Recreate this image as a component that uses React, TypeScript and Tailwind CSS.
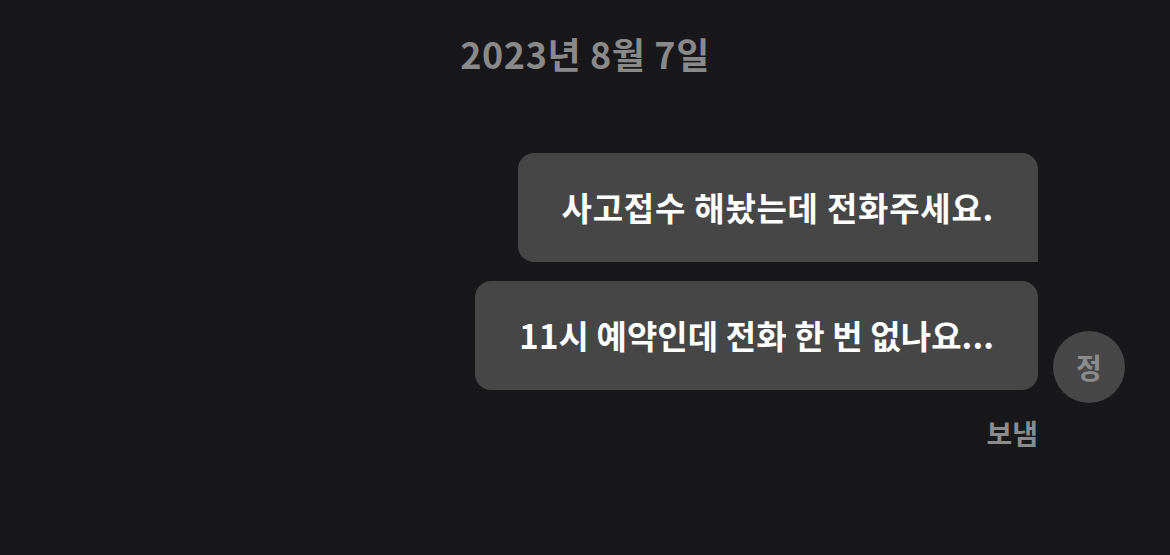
export default function App() {
  const font = { fontFamily: '"Noto Sans CJK KR", "Noto Sans", sans-serif' };
  return (
    <div
      className="w-[1170px] h-[555px] bg-[#18181a] overflow-hidden flex flex-col"
      style={font}
    >
      <div className="flex justify-center pt-[28px]">
        <span className="text-[36px] leading-[50px] font-bold text-[#8a8a8a] tracking-[0.6px]">
          2023년 8월 7일
        </span>
      </div>
      <div className="flex flex-col items-end pr-[45px] mt-[75px]">
        <div className="mr-[87px] bg-[#464646] rounded-[16px] rounded-br-none px-[44px] py-[30px]">
          <span className="block text-[33px] leading-[49px] font-bold text-white tracking-[0.75px]">
            사고접수 해놨는데 전화주세요.
          </span>
        </div>
        <div className="flex items-start gap-[15px] mt-[19px]">
          <div className="flex flex-col items-end">
            <div className="bg-[#464646] rounded-[16px] px-[44px] py-[30px]">
              <span className="block text-[33px] leading-[49px] font-bold text-white tracking-[0.08px]">
                11시 예약인데 전화 한 번 없나요...
              </span>
            </div>
            <span className="mt-[26px] text-[28px] leading-[34px] font-semibold text-[#8c8c8c]">
              보냄
            </span>
          </div>
          <div className="mt-[50px] w-[72px] h-[72px] rounded-full bg-[#474747] flex items-center justify-center">
            <span className="text-[28px] font-semibold text-[#8c8c8c]">정</span>
          </div>
        </div>
      </div>
    </div>
  );
}
